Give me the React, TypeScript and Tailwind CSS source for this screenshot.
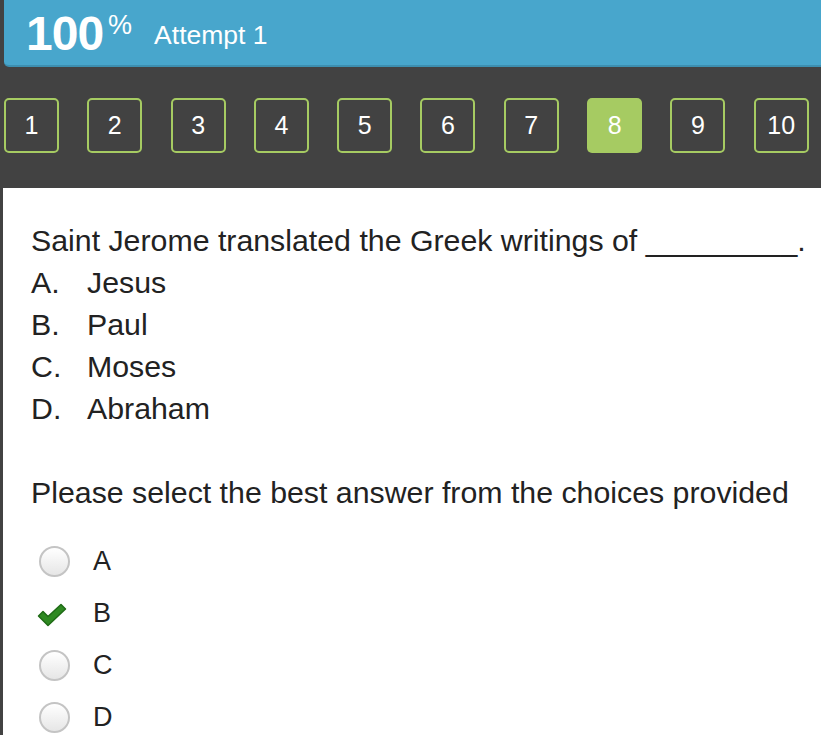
import React from "react";

const nums = [1, 2, 3, 4, 5, 6, 7, 8, 9, 10];

function Radio() {
  return (
    <div className="w-[31px] h-[31px] rounded-full border-[2px] border-[#c4c4c4] bg-gradient-to-b from-[#ffffff] to-[#e6e6e6]" />
  );
}

function Check() {
  return (
    <svg width="32" height="26" viewBox="0 0 32 26">
      <path
        d="M2.5 14 L7 9.5 L12 14.5 L25 2.5 L29.5 7 L12 23.5 Z"
        fill="#2f8a22"
        stroke="#1f6b16"
        strokeWidth="1.5"
        strokeLinejoin="round"
      />
    </svg>
  );
}

export default function App() {
  return (
    <div
      className="w-[821px] h-[735px] bg-[#424242] overflow-hidden"
      style={{ fontFamily: '"Liberation Sans", Arial, sans-serif' }}
    >
      <div className="ml-[4px] h-[67px] bg-[#48a6cc] rounded-bl-[5px] border-b-[2px] border-[#3d8fb0] flex items-center pl-[22px]">
        <span className="text-white font-bold text-[48px] leading-none tracking-[-1px] mt-[2px]">100</span>
        <span className="text-white text-[27px] leading-none self-start mt-[12px] ml-[5px]">%</span>
        <span className="text-white text-[26.5px] leading-none ml-[22px] mt-[5px]">Attempt 1</span>
      </div>
      <div className="flex gap-[28.3px] pl-[4px] pt-[31px] h-[121px]">
        {nums.map((n) => (
          <div
            key={n}
            className={
              n === 8
                ? "w-[55px] h-[55px] rounded-[5px] bg-[#a6cb62] flex items-center justify-center text-white text-[25px]"
                : "w-[55px] h-[55px] rounded-[5px] border-[2px] border-[#a6cb62] flex items-center justify-center text-white text-[25px]"
            }
          >
            {n}
          </div>
        ))}
      </div>
      <div className="ml-[3px] bg-white h-[547px] pl-[28px] pt-[32px] text-[#222222]">
        <div className="text-[30.3px] leading-[42px]">
          <div>Saint Jerome translated the Greek writings of _________.</div>
          {[
            ["A.", "Jesus"],
            ["B.", "Paul"],
            ["C.", "Moses"],
            ["D.", "Abraham"],
          ].map(([l, t]) => (
            <div key={l} className="flex">
              <span className="w-[56px]">{l}</span>
              <span>{t}</span>
            </div>
          ))}
        </div>
        <div className="text-[30.3px] leading-[42px] mt-[42px]">
          Please select the best answer from the choices provided
        </div>
        <div className="mt-[32px] flex flex-col gap-[21px] pl-[8px]">
          {["A", "B", "C", "D"].map((l) => (
            <div key={l} className="flex items-center h-[31px]">
              <div className="w-[54px] flex items-center">
                {l === "B" ? (
                  <div className="ml-[-3px] mt-[2px]">
                    <Check />
                  </div>
                ) : (
                  <Radio />
                )}
              </div>
              <span className="text-[27px] leading-none">{l}</span>
            </div>
          ))}
        </div>
      </div>
    </div>
  );
}
